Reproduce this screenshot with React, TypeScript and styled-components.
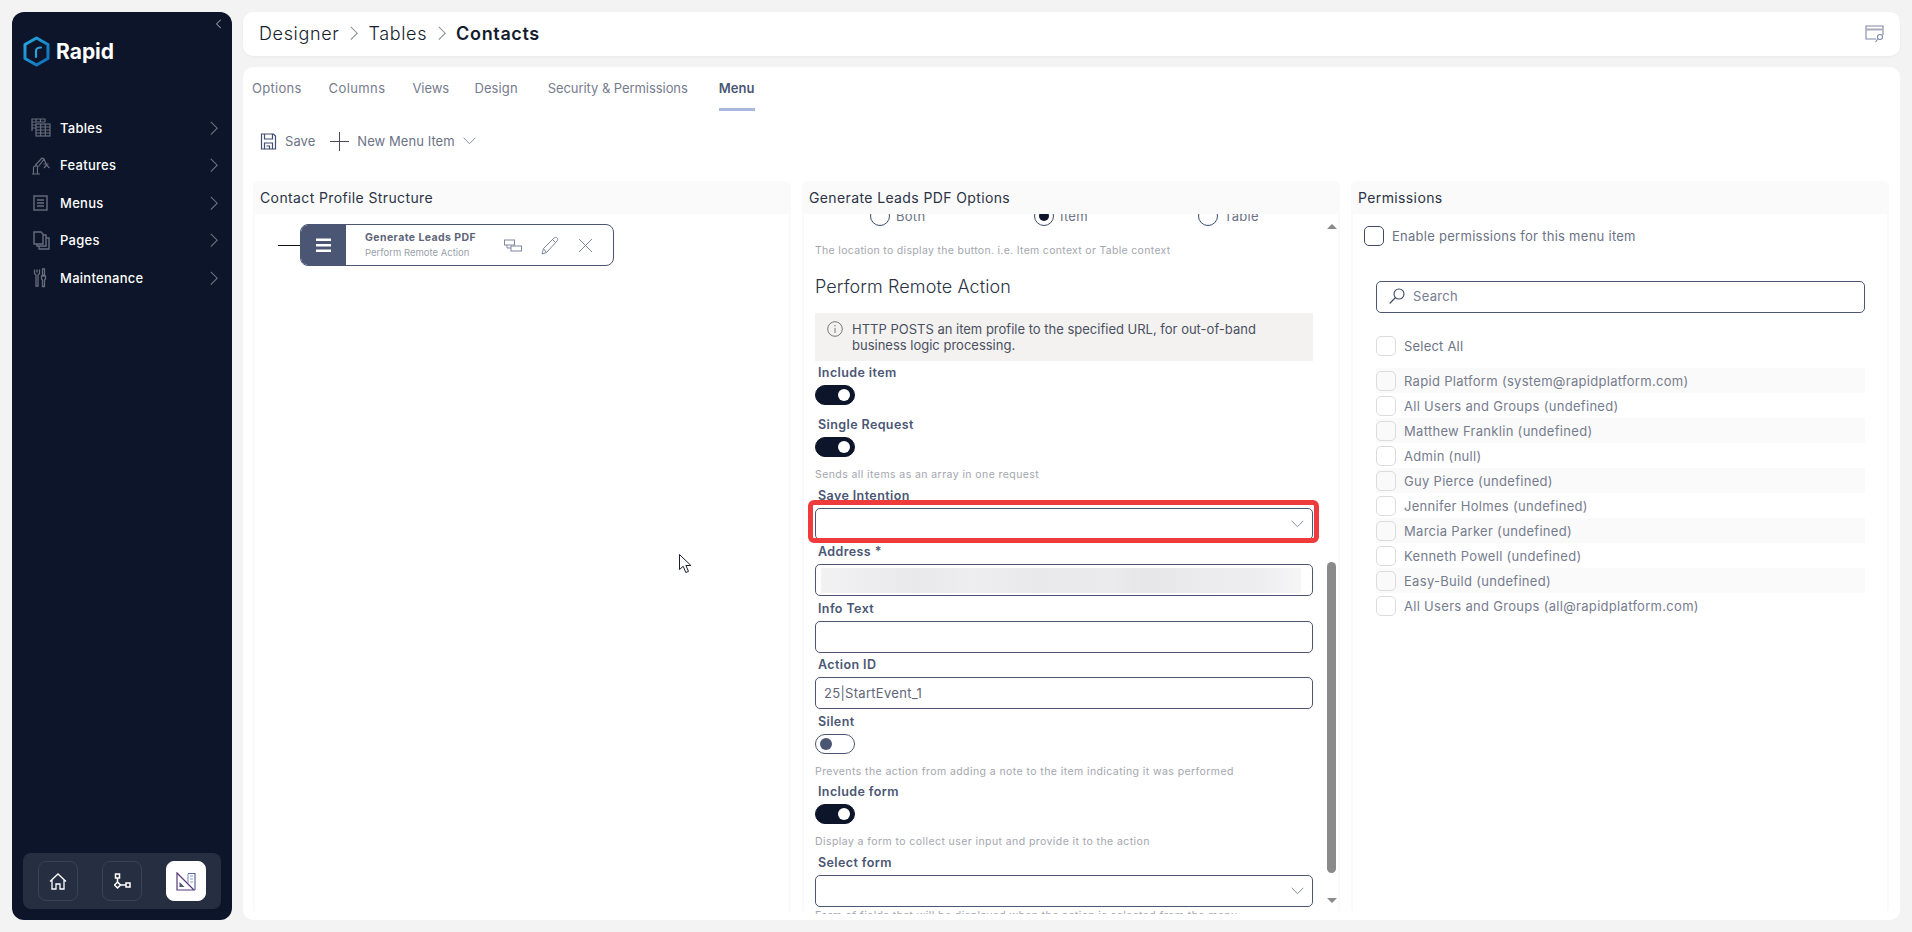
import React from "react";
import styled, { createGlobalStyle } from "styled-components";

const GlobalStyle = createGlobalStyle`
  html, body { margin: 0; padding: 0; height: 100%; background: #f3f3f3; }
  * { box-sizing: border-box; }
  body { font-family: Inter, "Noto Sans", sans-serif; overflow: hidden; }
`;

const Page = styled.div`
  display: flex;
  gap: 11px;
  width: 1912px;
  height: 932px;
  padding: 12px;
`;

/* sidebar */
const Sidebar = styled.aside`
  width: 220px;
  flex: none;
  display: flex;
  flex-direction: column;
  background: #0c1529;
  border-radius: 12px;
  padding: 0 11px 11px;
`;
const CollapseRow = styled.div`
  display: flex;
  justify-content: flex-end;
  height: 23px;
  padding: 7px 0 0 0;
`;
const Logo = styled.div`
  display: flex;
  align-items: center;
  gap: 6px;
  height: 32px;
`;
const LogoText = styled.span`
  color: #fff;
  font-size: 21px;
  font-weight: 700;
  letter-spacing: 0;
`;
const SideMenu = styled.nav`
  display: flex;
  flex-direction: column;
  margin-top: 42px;
`;
const SideItem = styled.div`
  display: flex;
  align-items: center;
  height: 37.5px;
  padding: 0 3px 0 8px;
  color: #fff;
  font-size: 13px;
  font-weight: 500;
  letter-spacing: 0.28px;
`;
const SideIcon = styled.span`
  display: flex;
  width: 29px;
  flex: none;
`;
const SideLabel = styled.span`
  flex: 1;
`;
const SideFooter = styled.div`
  margin-top: auto;
  height: 56px;
  display: flex;
  align-items: center;
  justify-content: space-between;
  padding: 0 15px;
  background: #262f42;
  border-radius: 8px;
`;
const FooterButton = styled.div<{ $active?: boolean }>`
  width: 40px;
  height: 40px;
  display: flex;
  align-items: center;
  justify-content: center;
  border-radius: 8px;
  background: ${(p) => (p.$active ? "#fff" : "transparent")};
  border: 1px solid ${(p) => (p.$active ? "#fff" : "#3a4356")};
`;

/* right side */
const Content = styled.div`
  flex: 1;
  min-width: 0;
  display: flex;
  flex-direction: column;
  gap: 11px;
`;
const TopBar = styled.header`
  height: 44px;
  flex: none;
  display: flex;
  align-items: center;
  padding: 0 16px 2px 16px;
  background: #fff;
  border-radius: 10px;
  box-shadow: 0 1px 3px rgba(0, 0, 0, 0.04);
`;
const Crumb = styled.span<{ $current?: boolean }>`
  color: #141c2e;
  font-size: 18px;
  font-weight: ${(p) => (p.$current ? 600 : 300)};
  letter-spacing: 0.65px;
`;
const CrumbSep = styled.span`
  display: flex;
  margin: 0 10.5px;
`;
const TopBarEnd = styled.span`
  display: flex;
  margin-left: auto;
`;
const MainCard = styled.main`
  flex: 1;
  min-height: 0;
  display: flex;
  flex-direction: column;
  background: #fff;
  border-radius: 10px;
  padding: 0 10px 6px 10px;
`;
const Tabs = styled.div`
  display: flex;
  height: 44px;
  flex: none;
  margin-left: -1px;
`;
const Tab = styled.div<{ $active?: boolean; $ls: number; $ml: number }>`
  height: 44px;
  margin-left: ${(p) => p.$ml}px;
  line-height: 42px;
  font-size: 13px;
  letter-spacing: ${(p) => p.$ls}px;
  font-weight: ${(p) => (p.$active ? 600 : 400)};
  color: ${(p) => (p.$active ? "#4a5674" : "#767c8e")};
  border-bottom: 3px solid ${(p) => (p.$active ? "#a8b7dc" : "transparent")};
`;
const Toolbar = styled.div`
  flex: none;
  display: flex;
  align-items: center;
  height: 32px;
  margin: 14px 0 24px;
  padding-left: 7px;
  color: #6c7386;
  font-size: 13px;
  letter-spacing: 0.06px;
`;
const ToolButton = styled.div`
  display: flex;
  align-items: center;
  gap: 8px;
  margin-right: 15px;
`;
const Columns = styled.div`
  flex: 1;
  min-height: 0;
  display: grid;
  grid-template-columns: repeat(3, 538px);
  gap: 11px;
`;
const Panel = styled.section`
  display: flex;
  flex-direction: column;
  min-height: 0;
  background: #fafafa;
  border-radius: 6px;
  padding: 0 2px;
`;
const PanelTitle = styled.h2`
  flex: none;
  margin: 0;
  height: 33px;
  line-height: 33px;
  padding-left: 5px;
  font-size: 14px;
  font-weight: 400;
  letter-spacing: 0.38px;
  color: #2b3345;
`;
const PanelBody = styled.div`
  position: relative;
  flex: 1;
  min-height: 0;
  background: #fff;
  overflow: hidden;
  display: flex;
`;
const MouseCursor = styled.svg`
  position: absolute;
  left: 424px;
  top: 340px;
`;

/* tree node */
const TreeRow = styled.div`
  display: flex;
  align-items: center;
  height: fit-content;
  margin: 10px 0 0 23px;
`;
const TreeLine = styled.div`
  width: 22px;
  height: 1px;
  background: #111;
`;
const Node = styled.div`
  display: flex;
  width: 314px;
  height: 42px;
  border: 1px solid #4a5674;
  border-radius: 8px;
  overflow: hidden;
`;
const NodeHandle = styled.div`
  width: 45px;
  flex: none;
  display: flex;
  align-items: center;
  justify-content: center;
  background: #4a5674;
`;
const NodeText = styled.div`
  flex: 1;
  padding: 6px 0 0 19px;
`;
const NodeTitle = styled.div`
  font-size: 10.5px;
  line-height: 14px;
  font-weight: 700;
  letter-spacing: 0.42px;
  color: #5d6679;
`;
const NodeSub = styled.div`
  font-size: 9.5px;
  line-height: 13px;
  margin-top: 1px;
  letter-spacing: 0px;
  color: #9a9faa;
`;
const NodeActions = styled.div`
  display: flex;
  align-items: center;
  gap: 19px;
  padding-right: 20px;
`;

/* middle form */
const FormScroll = styled.div`
  flex: 1;
  min-width: 0;
  padding: 0 12px 0 11px;
`;
const RadioRow = styled.div`
  display: flex;
  height: 20px;
  margin-top: -8px;
  padding-left: 55px;
`;
const RadioItem = styled.div`
  display: flex;
  flex: none;
  align-items: center;
  gap: 6px;
  width: 164px;
  font-size: 13px;
  color: #6c7386;
  letter-spacing: 0.28px;
`;
const RadioCircle = styled.span<{ $checked?: boolean }>`
  width: 20px;
  height: 20px;
  flex: none;
  border-radius: 50%;
  border: 1px solid #3e4a66;
  display: flex;
  align-items: center;
  justify-content: center;
  &::after {
    content: "";
    width: 10px;
    height: 10px;
    border-radius: 50%;
    background: ${(p) => (p.$checked ? "#0c1529" : "transparent")};
  }
`;
const Hint = styled.div<{ $mt: number; $ls?: number }>`
  margin-top: ${(p) => p.$mt}px;
  height: 16px;
  line-height: 18px;
  font-size: 10.5px;
  color: #a3a6ae;
  letter-spacing: ${(p) => p.$ls ?? 0.42}px;
  white-space: nowrap;
`;
const SectionTitle = styled.h3`
  margin: 16px 0 0;
  height: 24px;
  line-height: 26px;
  font-size: 18px;
  font-weight: 300;
  letter-spacing: 0.1px;
  color: #2b3345;
`;
const InfoBox = styled.div`
  margin-top: 15px;
  height: 48px;
  display: flex;
  gap: 9px;
  padding: 8px 12px;
  background: #f3f2f1;
  font-size: 13px;
  line-height: 16px;
  letter-spacing: 0;
  color: #4a5060;
`;
const InfoIcon = styled.span`
  flex: none;
  display: flex;
  height: 16px;
  align-items: center;
`;
const Field = styled.div<{ $mt: number }>`
  margin-top: ${(p) => p.$mt}px;
  display: flex;
  flex-direction: column;
  align-items: stretch;
`;
const FieldLabel = styled.label`
  height: 16px;
  line-height: 17px;
  margin-bottom: 5px;
  padding-left: 3px;
  font-size: 12.5px;
  font-weight: 600;
  letter-spacing: 0.4px;
  color: #4a5674;
`;
const InputBox = styled.div`
  position: relative;
  height: 32px;
  display: flex;
  align-items: center;
  justify-content: space-between;
  padding: 0 8px;
  border: 1px solid #4a5674;
  border-radius: 5px;
  background: #fff;
  font-size: 13px;
  letter-spacing: 0.3px;
  color: #5f6678;
`;
const BlurredValue = styled.div`
  width: 100%;
  height: 25px;
  margin: 0 -3px 0 -3px;
  background: linear-gradient(90deg, #f2f2f3 0%, #eeeef0 8%, #e9e9eb 20%, #eeeef0 32%, #e9e9ec 45%, #ebebed 60%, #e6e6e9 68%, #ebebed 78%, #eeeef0 92%, #f6f6f7 100%);
  filter: blur(0.5px);
`;
const Highlight = styled.div`
  position: absolute;
  left: -8px;
  top: -9px;
  right: -7px;
  bottom: -4px;
  border: 5px solid #ef3b3b;
  border-radius: 6px;
  pointer-events: none;
`;
const Toggle = styled.div<{ $on?: boolean }>`
  width: 40px;
  height: 20px;
  display: flex;
  align-items: center;
  justify-content: ${(p) => (p.$on ? "flex-end" : "flex-start")};
  padding: 0 4px;
  border-radius: 10px;
  background: ${(p) => (p.$on ? "#0c1529" : "#fff")};
  border: 1px solid ${(p) => (p.$on ? "#0c1529" : "#4a5674")};
  &::after {
    content: "";
    width: 12px;
    height: 12px;
    border-radius: 50%;
    background: ${(p) => (p.$on ? "#fff" : "#4a5674")};
  }
`;
const ScrollBar = styled.div`
  flex: none;
  width: 13px;
  display: flex;
  flex-direction: column;
  align-items: center;
`;
const ScrollArrowUp = styled.div`
  margin-top: 10px;
  width: 0;
  height: 0;
  border-left: 5px solid transparent;
  border-right: 5px solid transparent;
  border-bottom: 5px solid #8a8a8a;
`;
const ScrollThumb = styled.div`
  margin-top: 333px;
  width: 9px;
  height: 311px;
  border-radius: 5px;
  background: #8a8a8a;
`;
const ScrollArrowDown = styled.div`
  margin-top: 25px;
  width: 0;
  height: 0;
  border-left: 5px solid transparent;
  border-right: 5px solid transparent;
  border-top: 5px solid #8a8a8a;
`;

/* permissions */
const PermBody = styled.div`
  flex: 1;
  padding: 12px 0 0 11px;
`;
const EnableRow = styled.div`
  display: flex;
  align-items: center;
  gap: 8px;
  height: 20px;
  font-size: 13px;
  letter-spacing: 0.27px;
  color: #6c7386;
`;
const CheckBox = styled.span<{ $strong?: boolean }>`
  width: 20px;
  height: 20px;
  flex: none;
  border-radius: 5px;
  border: 1px solid ${(p) => (p.$strong ? "#3e4a66" : "#dcdcdc")};
`;
const PermList = styled.div`
  margin: 35px 22px 0 12px;
`;
const SearchBox = styled.div`
  height: 32px;
  display: flex;
  align-items: center;
  gap: 8px;
  padding: 0 12px 2px;
  border: 1px solid #4a5674;
  border-radius: 5px;
  font-size: 13px;
  letter-spacing: 0.3px;
  color: #767c8e;
`;
const SelectAll = styled.div`
  display: flex;
  align-items: center;
  gap: 8px;
  margin: 23px 0 12px;
  height: 20px;
  font-size: 13px;
  letter-spacing: 0.2px;
  color: #6c7386;
`;
const PermRow = styled.div`
  display: flex;
  align-items: center;
  gap: 8px;
  height: 25px;
  font-size: 13px;
  letter-spacing: 0.3px;
  color: #767c8e;
  &:nth-child(odd) {
    background: #fafafa;
  }
`;

const Chevron = ({ size = 8, color = "#9aa0ad", dir = "right" }: { size?: number; color?: string; dir?: "right" | "left" }) => (
  <svg width={size} height={size * 1.8} viewBox="0 0 10 18" fill="none" stroke={color} strokeWidth="1.300">
    <path d={dir === "right" ? "M1 1l8 8-8 8" : "M9 1L1 9l8 8"} />
  </svg>
);

const DownArrow = ({ w = 13, color = "#7c8496" }: { w?: number; color?: string }) => (
  <svg width={w} height={w * 0.6} viewBox="0 0 14 8" fill="none" stroke={color} strokeWidth="1">
    <path d="M.7.7L7 7l6.3-6.3" />
  </svg>
);

const sideStroke = "#666d7c";

const TablesIcon = () => (
  <svg width="20" height="19" viewBox="0 0 20 19" fill="none" stroke={sideStroke} strokeWidth="1.200">
    <path d="M1 13V1h13v3M1 4h13M1 7h4M1 10h4M5 1v3M9.500 1v3" />
    <rect x="5" y="6" width="14" height="12" fill="#0c1529" />
    <path d="M5 9h14M5 12h14M5 15h14M9.700 6v12M14.300 6v12" />
  </svg>
);
const FeaturesIcon = () => (
  <svg width="20" height="20" viewBox="0 0 20 20" fill="none" stroke={sideStroke} strokeWidth="1.200">
    <path d="M1 19h8M2.500 19v-7l3-1.500 1 1V19M4 10.500L11 3l2 1-5.500 7.500M13 4l2.500 6M15.500 10l-2.500 3M15.500 10l3 3M12.500 9h5" />
  </svg>
);
const MenusIcon = () => (
  <svg width="20" height="18" viewBox="0 0 20 18" fill="none" stroke={sideStroke} strokeWidth="1.400">
    <rect x="3" y="2" width="13" height="14" />
    <path d="M6 6h7M6 9h7M6 12h7" />
  </svg>
);
const PagesIcon = () => (
  <svg width="20" height="19" viewBox="0 0 20 19" fill="none" stroke={sideStroke} strokeWidth="1.400">
    <path d="M3 1h7l2 2v10H3z" />
    <path d="M12 4h3v11H6v-2" />
    <path d="M15 7h3v11H8v-3" />
  </svg>
);
const MaintenanceIcon = () => (
  <svg width="20" height="20" viewBox="0 0 20 20" fill="none" stroke={sideStroke} strokeWidth="1.300">
    <path d="M3.500 1.500v4l1.500 1.500v11h2V7l1.500-1.500v-4M6 1.500v3" />
    <path d="M11.500 1h2v6h-2zM10.500 8h4v3l-1 1v6.500h-2V12l-1-1z" />
  </svg>
);

const Hexagon = () => (
  <svg width="27" height="31" viewBox="0 0 27 31" fill="none">
    <defs>
      <linearGradient id="hex" x1="0" y1="0" x2="1" y2="1">
        <stop offset="0" stopColor="#2aa7e0" />
        <stop offset="1" stopColor="#0b6fb8" />
      </linearGradient>
    </defs>
    <path d="M13.500 2L25 8.500v14L13.500 29 2 22.500v-14z" stroke="url(#hex)" strokeWidth="3" strokeLinejoin="round" />
    <path d="M13 21v-6c0-2 2-3.500 5-3.500" stroke="#2a9fd8" strokeWidth="2.200" strokeLinecap="round" />
  </svg>
);

const HomeIcon = () => (
  <svg width="18" height="17" viewBox="0 0 18 17" fill="none" stroke="#fff" strokeWidth="1.300">
    <path d="M1 8.500L9 1l8 7.500M3 7v9h4v-5h4v5h4V7" />
  </svg>
);
const FlowIcon = () => (
  <svg width="17" height="17" viewBox="0 0 17 17" fill="none" stroke="#fff" strokeWidth="1.500">
    <rect x="1.500" y="1" width="4" height="4" />
    <path d="M3.500 5v4" />
    <path d="M3.500 9l3 3-3 3-3-3z" />
    <path d="M6.500 12H12" />
    <rect x="12" y="10" width="4" height="4" />
  </svg>
);
const RulerIcon = () => (
  <svg width="20" height="19" viewBox="0 0 20 19" fill="none">
    <path d="M1 1l17 17H1z" stroke="#5a3a78" strokeWidth="1.200" />
    <path d="M3.500 10l5 5h-5z" fill="#4a5674" />
    <path d="M12 1.500h7V18" stroke="#5a6a98" strokeWidth="1.200" />
    <path d="M12 2v9M14 4h3M14 7h3M14 10h3" stroke="#8a9ac4" strokeWidth="1.200" />
  </svg>
);

const SaveIcon = () => (
  <svg width="17" height="17" viewBox="0 0 16 17" fill="none" stroke="#3f4d6e" strokeWidth="1.200">
    <path d="M1 1h12l2 2v13H1z" />
    <path d="M4 1v5h8V1M4 16v-6h8v6M6 13h3v3" />
  </svg>
);
const PlusIcon = () => (
  <svg width="19" height="19" viewBox="0 0 19 19" fill="none" stroke="#4a4a5a" strokeWidth="1">
    <path d="M9.500 0v19M0 9.500h19" />
  </svg>
);
const WindowSearchIcon = () => (
  <svg width="19" height="17" viewBox="0 0 19 17" fill="none" stroke="#7f88a8" strokeWidth="1.100">
    <path d="M11 14H1V1h17v9" />
    <path d="M1 4.500h17" strokeWidth="2" stroke="#a9acb6" />
    <circle cx="15" cy="12" r="2.500" />
    <path d="M13 14l-2.500 2.800" />
  </svg>
);
const HamburgerIcon = () => (
  <svg width="15" height="15" viewBox="0 0 15 15" fill="#fff">
    <rect y="0.500" width="15" height="2.500" />
    <rect y="6" width="15" height="2.500" />
    <rect y="11.500" width="15" height="2.500" />
  </svg>
);
const nodeStroke = "#7f88a0";
const SubItemIcon = () => (
  <svg width="18" height="13" viewBox="0 0 18 13" fill="none" stroke={nodeStroke} strokeWidth="1">
    <rect x="0.500" y="1" width="10" height="5" />
    <rect x="7" y="7" width="10.500" height="5" fill="#fff" />
    <path d="M3 6v3h4" />
  </svg>
);
const PencilIcon = () => (
  <svg width="18" height="19" viewBox="0 0 18 19" fill="none" stroke={nodeStroke} strokeWidth="1">
    <path d="M1 18l1.500-5.500L13 2c1-1 2-1 3 0s1 2 0 3L5.500 16.500zM2.500 12.500l3 4M11.500 3.500l3 3" />
  </svg>
);
const CloseIcon = () => (
  <svg width="15" height="15" viewBox="0 0 15 15" fill="none" stroke={nodeStroke} strokeWidth="1">
    <path d="M1 1l13 13M14 1L1 14" />
  </svg>
);
const InfoCircle = () => (
  <svg width="16" height="16" viewBox="0 0 16 16" fill="none" stroke="#777" strokeWidth="1">
    <circle cx="8" cy="8" r="7.300" />
    <path d="M8 7v5M8 4v1.500" />
  </svg>
);
const SearchIcon = () => (
  <svg width="16" height="16" viewBox="0 0 16 16" fill="none" stroke="#3e4a66" strokeWidth="1.100">
    <circle cx="10" cy="6" r="5" />
    <path d="M6.500 9.500L.7 15.500" />
  </svg>
);

const sideItems = [
  { label: "Tables", icon: <TablesIcon /> },
  { label: "Features", icon: <FeaturesIcon /> },
  { label: "Menus", icon: <MenusIcon /> },
  { label: "Pages", icon: <PagesIcon /> },
  { label: "Maintenance", icon: <MaintenanceIcon /> },
];

const tabs = [
  { label: "Options", ls: 0.28, ml: 0 },
  { label: "Columns", ls: 0.4, ml: 27 },
  { label: "Views", ls: -0.1, ml: 27 },
  { label: "Design", ls: 0.1, ml: 25.5 },
  { label: "Security & Permissions", ls: -0.06, ml: 30 },
  { label: "Menu", ls: 0.05, ml: 31 },
];

const people = [
  "Rapid Platform (system@rapidplatform.com)",
  "All Users and Groups (undefined)",
  "Matthew Franklin (undefined)",
  "Admin (null)",
  "Guy Pierce (undefined)",
  "Jennifer Holmes (undefined)",
  "Marcia Parker (undefined)",
  "Kenneth Powell (undefined)",
  "Easy-Build (undefined)",
  "All Users and Groups (all@rapidplatform.com)",
];

export default function App() {
  return (
    <>
      <GlobalStyle />
      <Page>
        <Sidebar>
          <CollapseRow>
            <Chevron size={5.5} color="#fff" dir="left" />
          </CollapseRow>
          <Logo>
            <Hexagon />
            <LogoText>Rapid</LogoText>
          </Logo>
          <SideMenu>
            {sideItems.map((item) => (
              <SideItem key={item.label}>
                <SideIcon>{item.icon}</SideIcon>
                <SideLabel>{item.label}</SideLabel>
                <Chevron size={8} color="#6f7583" />
              </SideItem>
            ))}
          </SideMenu>
          <SideFooter>
            <FooterButton>
              <HomeIcon />
            </FooterButton>
            <FooterButton>
              <FlowIcon />
            </FooterButton>
            <FooterButton $active>
              <RulerIcon />
            </FooterButton>
          </SideFooter>
        </Sidebar>

        <Content>
          <TopBar>
            <Crumb>Designer</Crumb>
            <CrumbSep>
              <Chevron size={8} color="#8b8f98" />
            </CrumbSep>
            <Crumb>Tables</Crumb>
            <CrumbSep>
              <Chevron size={8} color="#8b8f98" />
            </CrumbSep>
            <Crumb $current>Contacts</Crumb>
            <TopBarEnd>
              <WindowSearchIcon />
            </TopBarEnd>
          </TopBar>

          <MainCard>
            <Tabs>
              {tabs.map((t) => (
                <Tab key={t.label} $active={t.label === "Menu"} $ls={t.ls} $ml={t.ml}>
                  {t.label}
                </Tab>
              ))}
            </Tabs>

            <Toolbar>
              <ToolButton>
                <SaveIcon />
                Save
              </ToolButton>
              <ToolButton>
                <PlusIcon />
                New Menu Item
                <DownArrow />
              </ToolButton>
            </Toolbar>

            <Columns>
              <Panel>
                <PanelTitle>Contact Profile Structure</PanelTitle>
                <PanelBody>
                  <TreeRow>
                    <TreeLine />
                    <Node>
                      <NodeHandle>
                        <HamburgerIcon />
                      </NodeHandle>
                      <NodeText>
                        <NodeTitle>Generate Leads PDF</NodeTitle>
                        <NodeSub>Perform Remote Action</NodeSub>
                      </NodeText>
                      <NodeActions>
                        <SubItemIcon />
                        <PencilIcon />
                        <CloseIcon />
                      </NodeActions>
                    </Node>
                  </TreeRow>
                  <MouseCursor width="13" height="20" viewBox="0 0 13 20" fill="#fff" stroke="#1a1f2e" strokeWidth="1">
                    <path d="M.5.5v15l3.700-3.200 2.600 6.200 2.700-1.100-2.600-5.900h5z" />
                  </MouseCursor>
                </PanelBody>
              </Panel>

              <Panel>
                <PanelTitle>Generate Leads PDF Options</PanelTitle>
                <PanelBody>
                  <FormScroll>
                    <RadioRow>
                      <RadioItem>
                        <RadioCircle />
                        Both
                      </RadioItem>
                      <RadioItem>
                        <RadioCircle $checked />
                        Item
                      </RadioItem>
                      <RadioItem>
                        <RadioCircle />
                        Table
                      </RadioItem>
                    </RadioRow>
                    <Hint $mt={16} $ls={0.31}>The location to display the button. i.e. Item context or Table context</Hint>
                    <SectionTitle>Perform Remote Action</SectionTitle>
                    <InfoBox>
                      <InfoIcon>
                        <InfoCircle />
                      </InfoIcon>
                      <span>
                        HTTP POSTS an item profile to the specified URL, for out-of-band
                        <br />
                        business logic processing.
                      </span>
                    </InfoBox>
                    <Field $mt={3}>
                      <FieldLabel>Include item</FieldLabel>
                      <Toggle $on />
                    </Field>
                    <Field $mt={11}>
                      <FieldLabel>Single Request</FieldLabel>
                      <Toggle $on />
                    </Field>
                    <Hint $mt={9}>Sends all items as an array in one request</Hint>
                    <Field $mt={5}>
                      <FieldLabel>Save Intention</FieldLabel>
                      <InputBox>
                        <span />
                        <DownArrow />
                        <Highlight />
                      </InputBox>
                    </Field>
                    <Field $mt={3}>
                      <FieldLabel>Address *</FieldLabel>
                      <InputBox>
                        <BlurredValue />
                      </InputBox>
                    </Field>
                    <Field $mt={3.5}>
                      <FieldLabel>Info Text</FieldLabel>
                      <InputBox />
                    </Field>
                    <Field $mt={3.5}>
                      <FieldLabel>Action ID</FieldLabel>
                      <InputBox>25|StartEvent_1</InputBox>
                    </Field>
                    <Field $mt={3.5}>
                      <FieldLabel>Silent</FieldLabel>
                      <Toggle />
                    </Field>
                    <Hint $mt={9}>Prevents the action from adding a note to the item indicating it was performed</Hint>
                    <Field $mt={4.5}>
                      <FieldLabel>Include form</FieldLabel>
                      <Toggle $on />
                    </Field>
                    <Hint $mt={9}>Display a form to collect user input and provide it to the action</Hint>
                    <Field $mt={4.5}>
                      <FieldLabel>Select form</FieldLabel>
                      <InputBox>
                        <span />
                        <DownArrow />
                      </InputBox>
                    </Field>
                    <Hint $mt={0}>Form of fields that will be displayed when the action is selected from the menu</Hint>
                  </FormScroll>
                  <ScrollBar>
                    <ScrollArrowUp />
                    <ScrollThumb />
                    <ScrollArrowDown />
                  </ScrollBar>
                </PanelBody>
              </Panel>

              <Panel>
                <PanelTitle>Permissions</PanelTitle>
                <PanelBody>
                  <PermBody>
                    <EnableRow>
                      <CheckBox $strong />
                      Enable permissions for this menu item
                    </EnableRow>
                    <PermList>
                      <SearchBox>
                        <SearchIcon />
                        Search
                      </SearchBox>
                      <SelectAll>
                        <CheckBox />
                        Select All
                      </SelectAll>
                      <div>
                        {people.map((p, i) => (
                          <PermRow key={i}>
                            <CheckBox />
                            {p}
                          </PermRow>
                        ))}
                      </div>
                    </PermList>
                  </PermBody>
                </PanelBody>
              </Panel>
            </Columns>
          </MainCard>
        </Content>
      </Page>
    </>
  );
}
